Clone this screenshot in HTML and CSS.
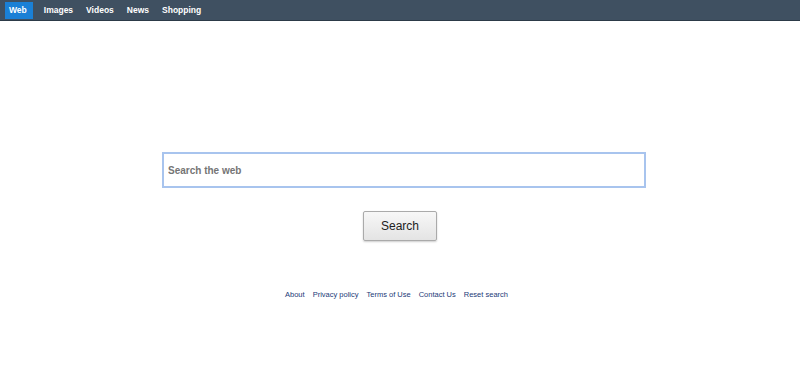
FILE: index.html
```html
<!DOCTYPE html>
<html lang="en">
<head>
    <meta charset="UTF-8">
    <meta name="viewport" content="width=device-width, initial-scale=1.0">
    <title>Search</title>
    <link rel="stylesheet" href="styles.css">
</head>
<body>
    <div class="topbar">
        <a class="tab active" href="#">Web</a>
        <a class="tab" href="#">Images</a>
        <a class="tab" href="#">Videos</a>
        <a class="tab" href="#">News</a>
        <a class="tab" href="#">Shopping</a>
    </div>

    <div class="main">
        <form class="search-form">
            <input type="text" class="search-input" placeholder="Search the web">
            <button type="submit" class="search-btn">Search</button>
        </form>

        <div class="footer">
            <a href="#">About</a>
            <a href="#">Privacy policy</a>
            <a href="#">Terms of Use</a>
            <a href="#">Contact Us</a>
            <a href="#">Reset search</a>
        </div>
    </div>
</body>
</html>
```

FILE: styles.css
```css
* {
    margin: 0;
    padding: 0;
    box-sizing: border-box;
}

body {
    font-family: "Liberation Sans", Arial, sans-serif;
    background-color: #fff;
}

.topbar {
    height: 21px;
    background-color: #3f5061;
    border-bottom: 1px solid #2c3a47;
    display: flex;
    align-items: stretch;
    gap: 3px;
    padding: 2px 0 1px 5px;
}

.tab {
    color: #fff;
    text-decoration: none;
    font-size: 8.5px;
    font-weight: bold;
    line-height: 17px;
    padding: 0 5px;
}

.tab.active {
    background-color: #1a80d6;
    padding: 0 6px 0 4px;
    margin-right: 3px;
}

.main {
    display: flex;
    flex-direction: column;
    align-items: center;
    padding-top: 131px;
}

.search-form {
    display: flex;
    flex-direction: column;
    align-items: center;
}

.search-input {
    width: 484px;
    height: 36px;
    margin-left: 8px;
    border: 2px solid #a8c4ee;
    padding: 0 4px;
    font-family: "Liberation Sans", Arial, sans-serif;
    font-size: 10px;
    font-weight: bold;
    outline: none;
}

.search-input::placeholder {
    color: #757575;
}

.search-btn {
    margin-top: 23px;
    width: 74px;
    height: 30px;
    font-family: "Liberation Sans", Arial, sans-serif;
    font-size: 12px;
    color: #222;
    background: linear-gradient(#f7f7f7, #e4e4e4);
    border: 1px solid #aaa;
    border-radius: 2px;
    box-shadow: 0 1px 2px rgba(0, 0, 0, 0.2);
    cursor: pointer;
}

.footer {
    margin-top: 49px;
    padding-right: 7px;
    display: flex;
    gap: 8px;
}

.footer a {
    font-size: 7.5px;
    color: #1c3a78;
    text-decoration: none;
}
```
